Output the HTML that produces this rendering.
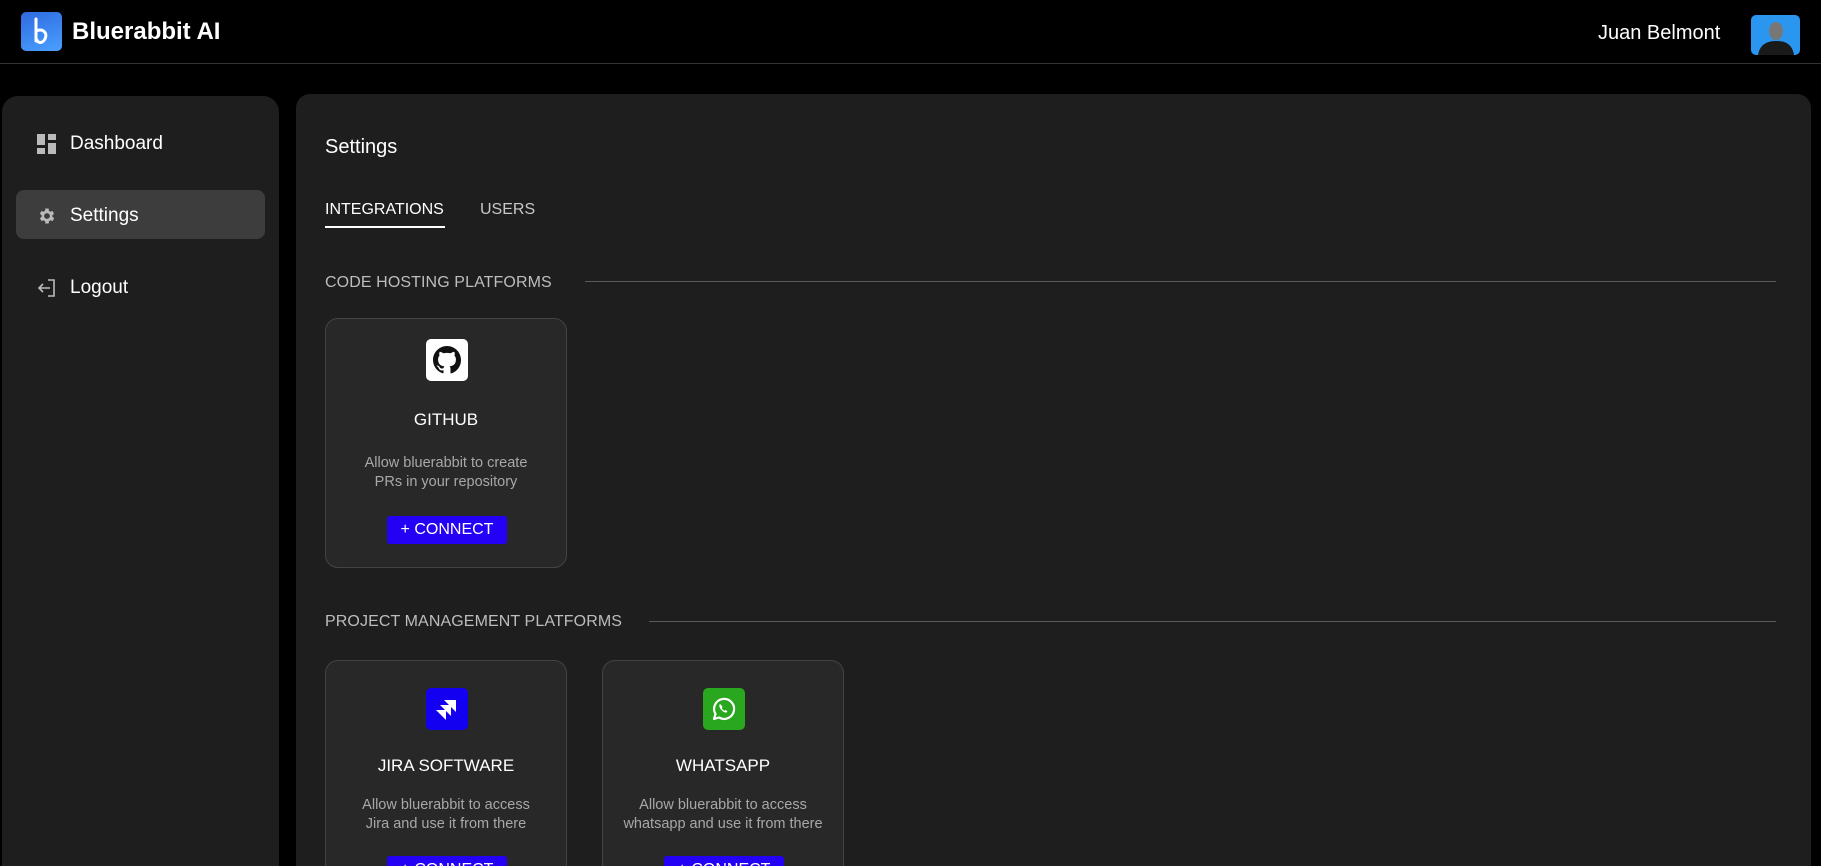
<!DOCTYPE html>
<html><head><meta charset="utf-8"><style>
*{box-sizing:border-box;margin:0;padding:0}
html,body{width:1821px;height:866px;overflow:hidden;background:#000}
body{font-family:"Liberation Sans",sans-serif;color:#fff}
#w{position:relative;width:1821px;height:866px;overflow:hidden}
.abs{position:absolute}
.hdr{left:0;top:0;width:1821px;height:64px;border-bottom:1px solid #333}
.side{left:2px;top:96px;width:277px;height:770px;background:#1e1e1e;border-radius:16px 16px 0 0}
.main{left:296px;top:94px;width:1515px;height:772px;background:#1e1e1e;border-radius:14px 14px 0 0}
.nav{left:0;font-size:19px;display:flex;align-items:center}
.sec{font-size:16px;color:#bdbdbd;letter-spacing:.1px}
.line{height:1px;background:#5a5a5a}
.card{width:242px;height:250px;background:#282828;border:1px solid #444;border-radius:13px;overflow:hidden}
.card .ic{position:absolute;left:100px;top:20px;width:42px;height:42px;border-radius:5px;display:flex;align-items:center;justify-content:center}
.card .t{position:absolute;left:0;width:100%;top:91px;text-align:center;font-size:17px}
.card .d{position:absolute;left:0;width:100%;top:135px;text-align:center;font-size:14.5px;color:#a8a8a8;line-height:19px}
.card .b{position:absolute;left:61px;top:197px;width:120px;height:28px;background:#2400f5;border-radius:3px;text-align:center;font-size:16px;line-height:28px}
.r2{height:206px;border-bottom:none;border-radius:13px 13px 0 0}
.r2 .ic{top:27px}.r2 .t{top:95px}.r2 .d{top:135px}.r2 .b{top:195px}
</style></head><body><div id="w">
<div class="abs hdr"></div>
<div class="abs" style="left:21px;top:12px;width:41px;height:39px;border-radius:5px;background:linear-gradient(160deg,#2f6ae0,#4aa0ff)">
<svg width="41" height="39" viewBox="0 0 41 39"><path d="M15 7 L15 29 M15 19 C22 16 27 21 24 27 C21 32 17 31 16 28" stroke="#fff" stroke-width="3" fill="none" stroke-linecap="round"/></svg></div>
<div class="abs" style="left:72px;top:18px;font-size:24px;font-weight:bold">Bluerabbit AI</div>
<div class="abs" style="left:1598px;top:22px;font-size:20px">Juan Belmont</div>
<div class="abs" style="left:1751px;top:15px;width:49px;height:40px;border-radius:5px;background:#2b96f0;overflow:hidden">
<svg width="49" height="40"><ellipse cx="25" cy="16" rx="7" ry="9" fill="#777"/><path d="M7 40 C9 28 18 26 25 26 C33 26 41 28 43 40Z" fill="#1a1a1a"/></svg></div>

<div class="abs side"></div>
<div class="abs nav" style="left:37px;top:133px"><svg width="20" height="20"><rect x="0" y="0" width="8" height="11" fill="#bbb"/><rect x="11" y="0" width="8" height="6" fill="#bbb"/><rect x="0" y="14" width="8" height="6" fill="#bbb"/><rect x="11" y="9" width="8" height="11" fill="#bbb"/></svg><span style="margin-left:13px">Dashboard</span></div>
<div class="abs" style="left:16px;top:190px;width:249px;height:49px;background:#3d3d3d;border-radius:8px"></div>
<div class="abs nav" style="left:37px;top:205px"><svg width="20" height="20" viewBox="0 0 24 24"><path fill="#bbb" d="M19.4 13a7.5 7.5 0 0 0 0-2l2.1-1.6-2-3.5-2.5 1a7 7 0 0 0-1.7-1L15 3h-4l-.4 2.9a7 7 0 0 0-1.7 1l-2.5-1-2 3.5L6.6 11a7.5 7.5 0 0 0 0 2l-2.1 1.6 2 3.5 2.5-1a7 7 0 0 0 1.7 1L11 21h4l.4-2.9a7 7 0 0 0 1.7-1l2.5 1 2-3.5zM13 15.5a3.5 3.5 0 1 1 0-7 3.5 3.5 0 0 1 0 7z" transform="translate(-1 0)"/></svg><span style="margin-left:13px">Settings</span></div>
<div class="abs nav" style="left:37px;top:277px"><svg width="20" height="20" viewBox="0 0 20 20"><path d="M11 2h6v16h-6M13 10H2M6 6l-4 4 4 4" stroke="#bbb" stroke-width="1.6" fill="none"/></svg><span style="margin-left:13px">Logout</span></div>

<div class="abs main"></div>
<div class="abs" style="left:325px;top:136px;font-size:20px">Settings</div>
<div class="abs" style="left:325px;top:201px;font-size:16px">INTEGRATIONS</div>
<div class="abs" style="left:325px;top:226px;width:120px;height:2px;background:#fff"></div>
<div class="abs" style="left:480px;top:201px;font-size:16px;color:#c8c8c8">USERS</div>

<div class="abs sec" style="left:325px;top:274px">CODE HOSTING PLATFORMS</div>
<div class="abs line" style="left:585px;top:281px;width:1191px"></div>
<div class="abs card" style="left:325px;top:318px">
<div class="ic" style="background:#fff"><svg width="28" height="28" viewBox="0 0 16 16"><path fill="#111" d="M8 0C3.58 0 0 3.58 0 8c0 3.54 2.29 6.53 5.47 7.59.4.07.55-.17.55-.38v-1.33c-2.23.48-2.7-1.07-2.7-1.07-.36-.93-.89-1.17-.89-1.17-.73-.5.05-.49.05-.49.8.06 1.23.83 1.23.83.72 1.22 1.87.87 2.33.66.07-.52.28-.87.5-1.07-1.78-.2-3.64-.89-3.64-3.95 0-.87.31-1.59.82-2.15-.08-.2-.36-1.02.08-2.12 0 0 .67-.21 2.2.82a7.6 7.6 0 0 1 4 0c1.53-1.04 2.2-.82 2.2-.82.44 1.1.16 1.92.08 2.12.51.56.82 1.27.82 2.15 0 3.07-1.87 3.75-3.65 3.95.29.25.54.73.54 1.48v2.2c0 .21.15.46.55.38A8 8 0 0 0 16 8c0-4.42-3.58-8-8-8z"/></svg></div>
<div class="t">GITHUB</div>
<div class="d">Allow bluerabbit to create<br>PRs in your repository</div>
<div class="b">+ CONNECT</div></div>

<div class="abs sec" style="left:325px;top:613px">PROJECT MANAGEMENT PLATFORMS</div>
<div class="abs line" style="left:649px;top:621px;width:1127px"></div>
<div class="abs card r2" style="left:325px;top:660px">
<div class="ic" style="background:#1400f0"><svg width="26" height="26" viewBox="0 0 26 26"><path d="M10 4h12v12z M6 9h11v11z M2 14h10v10z" fill="#fff"/></svg></div>
<div class="t">JIRA SOFTWARE</div>
<div class="d">Allow bluerabbit to access<br>Jira and use it from there</div>
<div class="b">+ CONNECT</div></div>
<div class="abs card r2" style="left:602px;top:660px">
<div class="ic" style="background:#29a71e"><svg width="28" height="28" viewBox="0 0 28 28"><path d="M4 24l1.5-5A10 10 0 1 1 9 22.5z" stroke="#fff" stroke-width="2.2" fill="none" stroke-linejoin="round"/><path d="M10 9c-1 1-1 3 1 5.5s4.5 3.5 5.5 3l1-1.2-2-1.3-1 .8c-1-.5-2.3-1.8-2.8-2.8l.8-1-1.3-2z" fill="#fff"/></svg></div>
<div class="t">WHATSAPP</div>
<div class="d">Allow bluerabbit to access<br>whatsapp and use it from there</div>
<div class="b">+ CONNECT</div></div>
</div></body></html>
